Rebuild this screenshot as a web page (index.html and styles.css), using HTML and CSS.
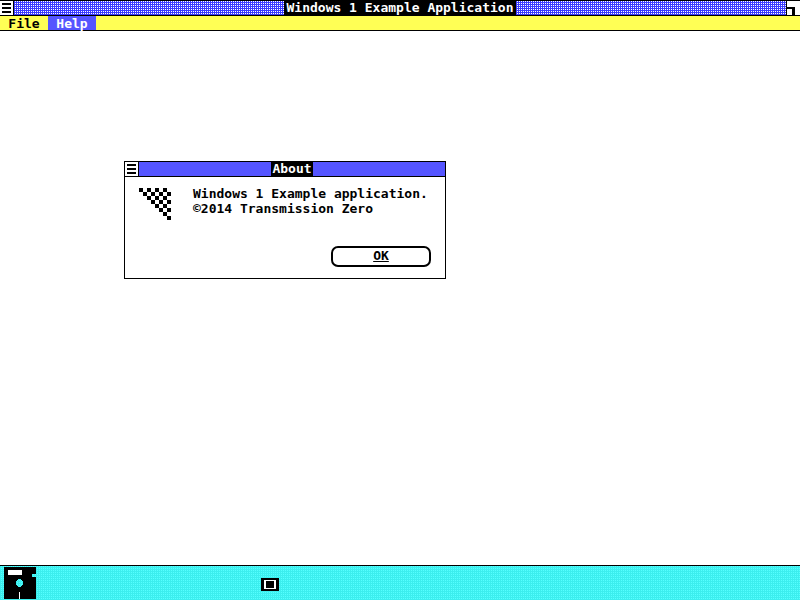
FILE: index.html
```html
<!DOCTYPE html>
<html lang="en">
<head>
  <meta charset="UTF-8">
  <title>Windows 1 Example Application</title>
  <link rel="stylesheet" href="styles.css">
</head>
<body>

<header class="titlebar">
  <button class="sysmenu" aria-label="System menu">
    <svg width="13" height="14" viewBox="0 0 13 14" shape-rendering="crispEdges">
      <path d="M2 2h9v2H2zM2 6h9v2H2zM2 10h9v2H2z"/>
    </svg>
  </button>
  <div class="pattern"><h1 class="caption">Windows 1 Example Application</h1></div>
  <button class="sizebox" aria-label="Size">
    <svg width="13" height="14" viewBox="0 0 13 14" shape-rendering="crispEdges">
      <path d="M0 6h8v8H5V8H0z"/>
    </svg>
  </button>
</header>

<nav class="menubar">
  <button class="menu">File</button>
  <button class="menu active">Help</button>
</nav>

<main class="client">
  <section class="dialog" role="dialog" aria-labelledby="about">
    <div class="dialog-title">
      <button class="sysmenu" aria-label="Dialog menu">
        <svg width="13" height="14" viewBox="0 0 13 14" shape-rendering="crispEdges">
          <path d="M2 2h9v2H2zM2 6h9v2H2zM2 10h9v2H2z"/>
        </svg>
      </button>
      <div class="solid"><h2 class="caption" id="about">About</h2></div>
    </div>
    <div class="dialog-body">
      <svg class="app-icon" width="32" height="32" viewBox="0 0 8 8" shape-rendering="crispEdges">
        <path d="M0 0h1v1H0zM2 0h1v1H2zM4 0h1v1H4zM6 0h1v1H6zM1 1h1v1H1zM3 1h1v1H3zM5 1h1v1H5zM7 1h1v1H7zM2 2h1v1H2zM4 2h1v1H4zM6 2h1v1H6zM3 3h1v1H3zM5 3h1v1H5zM7 3h1v1H7zM4 4h1v1H4zM6 4h1v1H6zM5 5h1v1H5zM7 5h1v1H7zM6 6h1v1H6zM7 7h1v1H7z"/>
      </svg>
      <p class="message">Windows 1 Example application.<br>©2014 Transmission Zero</p>
    </div>
    <div class="dialog-actions">
      <button class="ok">OK</button>
    </div>
  </section>
</main>

<footer class="iconbar">
  <button class="disk" aria-label="MS-DOS Executive">
    <svg width="32" height="32" viewBox="0 0 32 32" shape-rendering="crispEdges">
      <path fill-rule="evenodd" d="M0 0h32v7h-4v3h4v22H0zM14 12v1h-1v1h-1v4h1v1h1v1h3v-1h1v-1h1v-4h-1v-1h-1v-1z"/>
      <path fill="#fff" d="M4 3h14v5H4zM15 25h1v7h-1z"/>
    </svg>
  </button>
  <svg class="marker" width="18" height="13" viewBox="0 0 18 13" shape-rendering="crispEdges">
    <path d="M0 0h18v13H0z"/>
    <path fill="#fff" fill-rule="evenodd" d="M3 2h12v9H3zM5 3v7h8V3z"/>
  </svg>
</footer>

</body>
</html>
```
FILE: styles.css
```css
* { box-sizing: border-box; }
body { margin: 0; min-height: 100vh; display: flex; flex-direction: column; background: #fff; color: #000; font: bold 13px/15px "DejaVu Sans Mono", monospace; }
button { margin: 0; padding: 0; border: 0; background: none; color: inherit; font: inherit; }
svg { display: block; }
h1, h2, p { margin: 0; font: inherit; }

.titlebar { display: flex; height: 16px; border-top: 1px solid #000; border-bottom: 1px solid #000; }
.sysmenu { flex: none; background: #fff; border-right: 1px solid #000; }
.sizebox { flex: none; background: #fff; border-left: 1px solid #000; }
.pattern, .solid { flex: 1; display: flex; justify-content: center; background: #5555ff; }
.pattern { background: conic-gradient(#fff 25%, #3b3bff 0) 0 0 / 2px 2px; }
.caption { padding: 0 1px; line-height: 14px; background: #000; color: #fff; }
.pattern .caption { padding: 0 3px; }

.menubar { display: flex; height: 15px; background: #ffff55; border-bottom: 1px solid #000; }
.menu { min-width: 48px; padding: 0 8px; line-height: 15px; }
.menu.active { background: #5555ff; color: #fff; }

.client { flex: 1; position: relative; }
.dialog { position: absolute; left: 124px; top: 130px; width: 322px; background: #fff; border: 1px solid #000; }
.dialog-title { display: flex; height: 15px; border-bottom: 1px solid #000; }
.dialog-body { display: flex; gap: 22px; padding: 9px 0 0 14px; }
.app-icon { margin-top: 2px; }
.message { white-space: nowrap; }
.dialog-actions { display: flex; justify-content: flex-end; padding: 26px 14px 11px; }
.ok { width: 100px; height: 21px; padding-bottom: 2px; border: 2px solid #000; border-radius: 7px; line-height: 15px; text-decoration: underline; }

.iconbar { display: flex; align-items: flex-start; height: 35px; padding: 1px 4px 0; border-top: 1px solid #000; background: conic-gradient(#55ffff 25%, #3ceeee 0) 0 0 / 2px 2px; }
.marker { margin: 11px 0 0 225px; }
```
